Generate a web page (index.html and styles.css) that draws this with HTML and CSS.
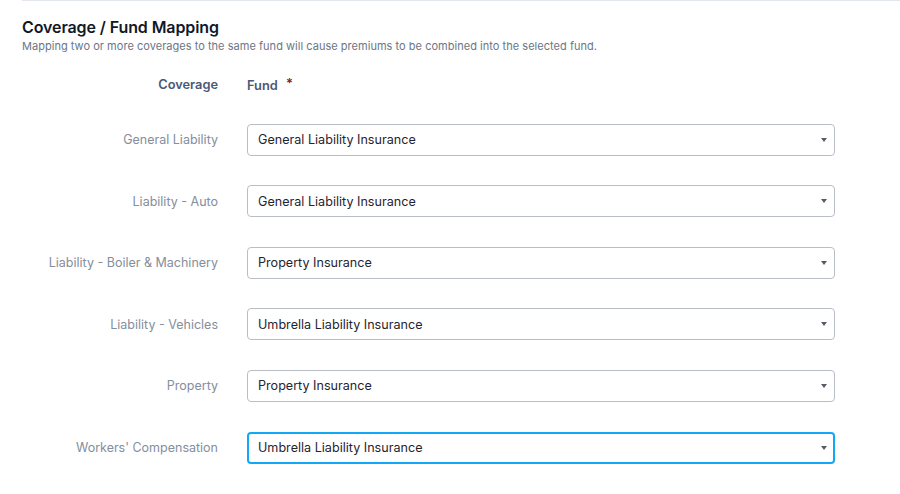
FILE: index.html
```html
<!DOCTYPE html>
<html>
<head>
<meta charset="utf-8">
<link rel="stylesheet" href="styles.css">
</head>
<body>
<div class="page">
  <div class="rule"></div>
  <h2 class="title">Coverage / Fund Mapping</h2>
  <p class="subtitle">Mapping two or more coverages to the same fund will cause premiums to be combined into the selected fund.</p>
  <div class="grid">
    <div class="head head-cov">Coverage</div>
    <div class="head head-fund">Fund <span class="req">*</span></div>

    <div class="label">General Liability</div>
    <div class="select"><span>General Liability Insurance</span><i class="caret"></i></div>

    <div class="label">Liability - Auto</div>
    <div class="select"><span>General Liability Insurance</span><i class="caret"></i></div>

    <div class="label">Liability - Boiler &amp; Machinery</div>
    <div class="select"><span>Property Insurance</span><i class="caret"></i></div>

    <div class="label">Liability - Vehicles</div>
    <div class="select"><span>Umbrella Liability Insurance</span><i class="caret"></i></div>

    <div class="label">Property</div>
    <div class="select"><span>Property Insurance</span><i class="caret"></i></div>

    <div class="label">Workers' Compensation</div>
    <div class="select focused"><span>Umbrella Liability Insurance</span><i class="caret"></i></div>
  </div>
</div>
</body>
</html>
```

FILE: styles.css
```css
* { box-sizing: border-box; }
html, body { margin: 0; padding: 0; background: #fff; }
body { font-family: Inter, "Noto Sans", sans-serif; }
.page { padding-left: 22px; }
.rule { height: 1px; background: #e3e8ef; }
.title {
  margin: 16px 0 0 0;
  font-size: 16px;
  line-height: 20px;
  font-weight: 600;
  color: #111827;
  letter-spacing: -0.1px;
}
.subtitle {
  margin: 2px 0 0 0;
  font-size: 11px;
  line-height: 14px;
  color: #6b7685;
  letter-spacing: 0.03px;
}
.grid {
  margin-top: 23px;
  display: grid;
  grid-template-columns: 196px 588px;
  grid-template-rows: 18px repeat(6, 32px);
  column-gap: 29px;
  row-gap: 29.6px;
  align-items: center;
}
.head {
  font-size: 12.8px;
  line-height: 18px;
  font-weight: 600;
  color: #4a5876;
}
.head-cov { text-align: right; }
.req { color: #8b1a1a; font-size: 13px; margin-left: 5px; position: relative; top: -2px; }
.label {
  text-align: right;
  font-size: 12.5px;
  color: #848e9d;
}
.select {
  height: 32px;
  border: 1px solid #b9bec6;
  border-radius: 4px;
  display: flex;
  align-items: center;
  justify-content: space-between;
  padding: 0 7px 0 10px;
  font-size: 12.6px;
  color: #1f2530;
}
.select.focused {
  border: 2px solid #12a8f5;
  padding-left: 9px;
  padding-right: 6px;
}
.caret {
  width: 0; height: 0;
  border-left: 3.5px solid transparent;
  border-right: 3.5px solid transparent;
  border-top: 4px solid #555c66;
}
```
